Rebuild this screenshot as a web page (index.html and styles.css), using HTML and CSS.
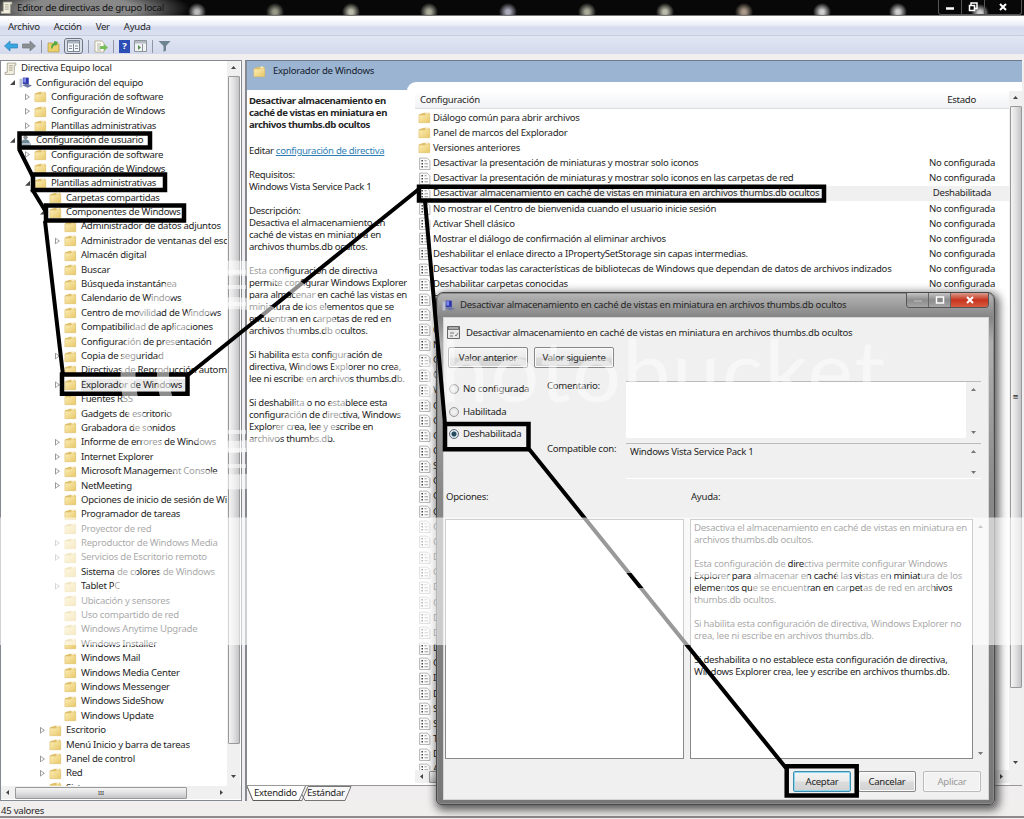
FILE: index.html
```html
<!DOCTYPE html>
<html lang="es">
<head>
    <meta charset="UTF-8">
    <meta name="viewport" content="width=device-width, initial-scale=1.0">
    <title>Editor de directivas de grupo local</title>
    <link rel="stylesheet" href="styles.css">
</head>
<body>
    <!-- Shared icons -->
    <svg class="defs" width="0" height="0">
        <defs>
            <linearGradient id="fold" x1="0" y1="0" x2="1" y2="1">
                <stop offset="0" stop-color="#fdf0bb"/>
                <stop offset="1" stop-color="#e8c766"/>
            </linearGradient>
        </defs>
        <symbol id="folder" viewBox="0 0 12 12">
            <path d="M1 3l4.500-1.500H10.500V10H1z" fill="#e0c06a"/>
            <path d="M7 1.500h2.500v3H7z" fill="#fffbe6"/>
            <path d="M.8 3.800h5.500l1-1h3.500v8H.8z" fill="url(#fold)" stroke="#dcbc68" stroke-width=".5"/>
        </symbol>
        <symbol id="scroll" viewBox="0 0 12 12">
            <path d="M3 1h8v2H9.500v8.500H1V9.500h2z" fill="#f3f0e2" stroke="#a5a192" stroke-width=".8"/>
            <path d="M4.500 3.500h3.500M4.500 5.500h3.500M4.500 7.500h3.500" stroke="#9a9684" stroke-width=".8"/>
        </symbol>
        <symbol id="computer" viewBox="0 0 12 12">
            <path d="M.5 2.500h2.500v8H.5z" fill="#b9c0d4"/>
            <path d="M3.500 1.500h5.500v6H3.500z" fill="#2b35b0"/>
            <path d="M4 2h2.500v4H4z" fill="#7f8ae6"/>
            <path d="M3 8.500l4-1.500 5 1.800-4 2z" fill="#6f79a5"/>
        </symbol>
        <symbol id="user" viewBox="0 0 12 12">
            <circle cx="6" cy="3" r="2" fill="#8a8f96"/>
            <path d="M2 8.500c0-5 8-5 8 0z" fill="#6d8795"/>
            <path d="M1 8.500h10v2.500H1z" fill="#a8b9c4"/>
        </symbol>
        <symbol id="policy" viewBox="0 0 12 12">
            <path d="M1.500 1h7l2.500 2.500V11.500H1.500z" fill="#fdfdfd" stroke="#a9a9a9" stroke-width=".8"/>
            <path d="M3.200 3.500h1.400M3.200 6.200h1.400M3.200 9h1.400" stroke="#444" stroke-width="1.300"/>
            <path d="M6 3.500h2M6 6.200h3.200M6 9h3.200" stroke="#999" stroke-width="1"/>
        </symbol>
    </svg>

    <div class="titlebar">
        <svg class="ic"><use href="#scroll"/></svg>
        <span class="caption">Editor de directivas de grupo local</span>
        <div class="wincontrols">
            <span><svg width="10" height="10"><path d="M1 6.500h8" stroke="#fff" stroke-width="2.500"/></svg></span>
            <span><svg width="10" height="10"><path d="M3 3V1h6v5.500H7M1.500 3.500h5v5h-5z" fill="none" stroke="#fff" stroke-width="1.500"/></svg></span>
            <span class="wide"><svg width="10" height="10"><path d="M2 2l6 6M8 2L2 8" stroke="#fff" stroke-width="2"/></svg></span>
        </div>
    </div>

    <div class="menubar">
        <span>Archivo</span><span>Acción</span><span>Ver</span><span>Ayuda</span>
    </div>

    <div class="toolbar">
        <svg width="14" height="12"><path d="M0.500 6L6 1v3h7.500v4H6v3z" fill="#3aa6e0" stroke="#2b7fb8" stroke-width=".7"/></svg>
        <svg width="14" height="12"><path d="M13.500 6L8 1v3H.5v4H8v3z" fill="#8b8f94" stroke="#74787d" stroke-width=".7"/></svg>
        <b></b>
        <svg width="13" height="13"><path d="M1 3h5l1 1h5v8H1z" fill="#ecd06b" stroke="#b39a45" stroke-width=".7"/><path d="M4 8c0-3 1-4 3-5V1l4 1-2 4-1-1C6 6 6 7 5 9z" fill="#57a843"/></svg>
        <span class="pressed"><svg width="13" height="12"><path d="M.5.500h12v11H.5z" fill="#f5f7fa" stroke="#7d8794"/><path d="M1 1h11v2.500H1z" fill="#aab3bf"/><path d="M6.500 4v7M2 6h3M2 8.500h3M8 6h3M8 8.500h3" stroke="#7d8794"/></svg></span>
        <b></b>
        <svg width="14" height="13"><path d="M1 1h7l2 2v9H1z" fill="#fffef0" stroke="#a9a58a" stroke-width=".8"/><path d="M3 4h4M3 6h3M3 8h3M3 10h4" stroke="#999" stroke-width=".8"/><path d="M6 6h4V4l4 3.500L10 11V9H6z" fill="#79bd5c"/></svg>
        <b></b>
        <span class="help">?</span>
        <svg width="13" height="12"><path d="M.5.500h12v11H.5z" fill="#f0f2f4" stroke="#8d949c"/><path d="M1 1h11v2.500H1z" fill="#b5bbc3"/><path d="M8.500 4v7" stroke="#8d949c"/><path d="M4 5l3 2.500L4 10z" fill="#5a8f54"/></svg>
        <b></b>
        <svg width="13" height="12"><path d="M.5 1h12L8 6v4.500L5.500 12V6z" fill="#6d8490"/></svg>
    </div>

    <div class="workspace">
        <div class="treepane">
            <div class="treebody">
                <ul class="tree" id="tree"></ul>
                <div class="vscroll"><i class="up"></i><div class="thumb treethumb"></div><i class="down"></i></div>
            </div>
            <div class="hscroll"><i class="left"></i><div class="thumb">III</div><i class="right"></i></div>
        </div>

        <div class="rightpane">
            <div class="bluehead">
                <svg class="ic"><use href="#folder"/></svg>Explorador de Windows
            </div>
            <div class="detail">
                <div class="description">
                    <strong>Desactivar almacenamiento en<br>caché de vistas en miniatura en<br>archivos thumbs.db ocultos</strong>
                    <p class="edit">Editar <a>configuración de directiva</a></p>
                    <p>Requisitos:<br>Windows Vista Service Pack 1</p>
                    <p>Descripción:<br>Desactiva el almacenamiento en<br>caché de vistas en miniatura en<br>archivos thumbs.db ocultos.</p>
                    <p>Esta configuración de directiva<br>permite configurar Windows Explorer<br>para almacenar en caché las vistas en<br>miniatura de los elementos que se<br>encuentran en carpetas de red en<br>archivos thumbs.db ocultos.</p>
                    <p>Si habilita esta configuración de<br>directiva, Windows Explorer no crea,<br>lee ni escribe en archivos thumbs.db.</p>
                    <p>Si deshabilita o no establece esta<br>configuración de directiva, Windows<br>Explorer crea, lee y escribe en<br>archivos thumbs.db.</p>
                </div>
                <div class="listing">
                    <div class="listmain">
                        <div class="listhead"><span>Configuración</span><span class="state">Estado</span></div>
                        <ul class="list" id="list"></ul>
                        <div class="hscroll"><i class="left"></i><div class="thumb listthumb"></div><i class="right"></i></div>
                    </div>
                    <div class="vscroll wide"><i class="up"></i><div class="thumb listvthumb">≡</div><i class="down"></i></div>
                </div>
            </div>
            <div class="tabs">
                <svg width="110" height="15"><path d="M0 0l6 14.500h49L61 .5h43L98 14.500H58l-3-6" fill="#f7f7f7" stroke="#555" stroke-width=".8"/><path d="M0 0l6 14h46L58 0z" fill="#fff"/><path d="M0 0l6 14.500h46L58.500 0" fill="none" stroke="#555" stroke-width=".8"/></svg>
                <span class="t1">Extendido</span><span class="t2">Estándar</span>
            </div>
        </div>
    </div>

    <div class="statusbar">45 valores</div>

    <div class="dialog">
        <div class="dlgtitle">
            <svg class="ic"><use href="#computer"/></svg>
            <span>Desactivar almacenamiento en caché de vistas en miniatura en archivos thumbs.db ocultos</span>
            <div class="dlgcontrols">
                <i><svg width="10" height="8"><path d="M1 5h8" stroke="#aaa" stroke-width="2"/></svg></i>
                <i><svg width="10" height="8"><path d="M1.500 1h7v6h-7z" fill="#888" stroke="#fff" stroke-width="1.500"/></svg></i>
                <i class="close"><svg width="10" height="8"><path d="M2 1l6 6M8 1L2 7" stroke="#fff" stroke-width="2"/></svg></i>
            </div>
        </div>
        <div class="client">
            <div class="setting">
                <svg width="13" height="13"><path d="M.5.500h12v12H.5z" fill="#e8e8e8" stroke="#666"/><path d="M1 1h11v3H1z" fill="#777"/><path d="M2 2h9" stroke="#ddd"/><path d="M3 7h4M3 10h3M8 9l1 1 2-3" fill="none" stroke="#777"/></svg>
                <span>Desactivar almacenamiento en caché de vistas en miniatura en archivos thumbs.db ocultos</span>
            </div>
            <div class="nav"><button>Valor anterior</button><button>Valor siguiente</button></div>
            <div class="form">
                <div class="radios">
                    <label><i></i>No configurada</label>
                    <label><i></i>Habilitada</label>
                    <label><i class="on"></i>Deshabilitada</label>
                </div>
                <div class="labels"><span>Comentario:</span><span>Compatible con:</span></div>
                <div class="fields">
                    <div class="field comment"><div></div><div class="mini"><i class="up"></i><i class="down"></i></div></div>
                    <div class="field support"><div>Windows Vista Service Pack 1</div><div class="mini"><i class="up"></i><i class="down"></i></div></div>
                </div>
            </div>
            <div class="headings"><span>Opciones:</span><span>Ayuda:</span></div>
            <div class="boxes">
                <div class="options"></div>
                <div class="helptext">
                    <p>Desactiva el almacenamiento en caché de vistas en miniatura en<br>archivos thumbs.db ocultos.</p>
                    <p>Esta configuración de directiva permite configurar Windows<br>Explorer para almacenar en caché las vistas en miniatura de los<br>elementos que se encuentran en carpetas de red en archivos<br>thumbs.db ocultos.</p>
                    <p>Si habilita esta configuración de directiva, Windows Explorer no<br>crea, lee ni escribe en archivos thumbs.db.</p>
                    <p>Si deshabilita o no establece esta configuración de directiva,<br>Windows Explorer crea, lee y escribe en archivos thumbs.db.</p>
                </div>
                <div class="mini"><i class="up"></i><i class="down"></i></div>
            </div>
            <div class="actions">
                <button class="primary">Aceptar</button><button>Cancelar</button><button disabled>Aplicar</button>
            </div>
        </div>
    </div>

    <!-- Guide boxes and connectors -->
    <svg class="overlay" viewBox="0 0 1024 819">
        <g fill="none" stroke="#000" stroke-width="4.500">
            <path d="M19.500 133.500h130.500v14H19.500zM33 174.500h132v15.500H33zM46 205.500h138v15H46zM62 374.500h125.500v19.200H62z"/>
            <path d="M419 186.800h405v13.700H419zM445 424h83.500v25.300H445zM786.700 766.200h70v29.300h-70z"/>
            <path d="M19 149l14 28M32 189l14 23M45 221l18 154M188 375L419 189M425 201l20 223M529 449L786 768" stroke-width="4"/>
        </g>
    </svg>

    <!-- Watermark -->
    <svg class="overlay" viewBox="0 0 1024 819">
        <path fill="#fff" fill-opacity=".6" fill-rule="evenodd" d="M0 517.500h1024v127.500H0zM622 573h16l9 15h-16zM80 568h34v22H80zM137 568h22v10h-22zM690 577h30v16h-30zM728 572h24v20h-24zM788 556h16v14h-16zM808 572h28v20h-28zM850 572h12v20h-12zM890 572h30v10h-30zM934 582h18v10h-18z"/>
        <g fill="none" stroke="#fff" stroke-opacity=".55">
            <circle cx="235" cy="375" r="107" stroke-width="15"/>
            <circle cx="235" cy="375" r="72" stroke-width="12"/>
            <path d="M228 272h18M228 287h18M228 304h18M228 432h18M228 450h18M228 466h18" stroke-width="4"/>
        </g>
        <text x="391" y="402" class="mark" textLength="494">photobucket</text>
    </svg>

    <script>
        // level, icon, expander (o = open, c = closed, - = none), label
        const nodes = `0 scroll - Directiva Equipo local
1 computer o Configuración del equipo
2 folder c Configuración de software
2 folder c Configuración de Windows
2 folder c Plantillas administrativas
1 user o Configuración de usuario
2 folder c Configuración de software
2 folder - Configuración de Windows
2 folder o Plantillas administrativas
3 folder - Carpetas compartidas
3 folder o Componentes de Windows
4 folder - Administrador de datos adjuntos
4 folder c Administrador de ventanas del escritorio
4 folder - Almacén digital
4 folder - Buscar
4 folder - Búsqueda instantánea
4 folder - Calendario de Windows
4 folder - Centro de movilidad de Windows
4 folder - Compatibilidad de aplicaciones
4 folder - Configuración de presentación
4 folder c Copia de seguridad
4 folder - Directivas de Reproducción automática
4 folder c Explorador de Windows
4 folder - Fuentes RSS
4 folder - Gadgets de escritorio
4 folder - Grabadora de sonidos
4 folder c Informe de errores de Windows
4 folder c Internet Explorer
4 folder c Microsoft Management Console
4 folder c NetMeeting
4 folder - Opciones de inicio de sesión de Windows
4 folder - Programador de tareas
4 folder - Proyector de red
4 folder c Reproductor de Windows Media
4 folder c Servicios de Escritorio remoto
4 folder - Sistema de colores de Windows
4 folder c Tablet PC
4 folder - Ubicación y sensores
4 folder - Uso compartido de red
4 folder - Windows Anytime Upgrade
4 folder - Windows Installer
4 folder - Windows Mail
4 folder - Windows Media Center
4 folder - Windows Messenger
4 folder - Windows SideShow
4 folder - Windows Update
3 folder c Escritorio
3 folder - Menú Inicio y barra de tareas
3 folder c Panel de control
3 folder c Red
3 folder - Sistema`.split('\n');

        document.getElementById('tree').innerHTML = nodes.map(line => {
            const [, level, icon, state, label] = line.match(/^(\d) (\w+) (.) (.+)$/);
            const arrow = { o: 'open', c: 'closed', '-': '' }[state];
            const sel = label === 'Explorador de Windows' ? ' selected' : '';
            return `<li class="level${level}"><i class="arrow ${arrow}"></i><svg class="ic"><use href="#${icon}"/></svg><span class="label${sel}">${label}</span></li>`;
        }).join('');

        const folders = ['Diálogo común para abrir archivos', 'Panel de marcos del Explorador', 'Versiones anteriores'];
        const policies = [
            'Desactivar la presentación de miniaturas y mostrar solo iconos',
            'Desactivar la presentación de miniaturas y mostrar solo iconos en las carpetas de red',
            'Desactivar almacenamiento en caché de vistas en miniatura en archivos thumbs.db ocultos',
            'No mostrar el Centro de bienvenida cuando el usuario inicie sesión',
            'Activar Shell clásico',
            'Mostrar el diálogo de confirmación al eliminar archivos',
            'Deshabilitar el enlace directo a IPropertySetStorage sin capas intermedias.',
            'Desactivar todas las características de bibliotecas de Windows que dependan de datos de archivos indizados',
            'Deshabilitar carpetas conocidas'
        ].concat('D N Q N C C V C C C C S C C Q C C D O D C D D D C I D S S T D A'.split(' '));

        document.getElementById('list').innerHTML =
            folders.map(t => `<li><svg class="ic"><use href="#folder"/></svg><span>${t}</span></li>`).join('') +
            policies.map((t, i) => `<li class="${i === 2 ? 'current' : ''}"><svg class="ic"><use href="#policy"/></svg><span>${t}</span><em>${i === 2 ? 'Deshabilitada' : i < 9 ? 'No configurada' : ''}</em></li>`).join('');
    </script>
</body>
</html>
```
FILE: styles.css
```css
* {
    box-sizing: border-box;
}

body {
    margin: 0;
    width: 1024px;
    height: 819px;
    overflow: hidden;
    position: relative;
    display: flex;
    flex-direction: column;
    background: #f0eeee;
    color: #262626;
    font-family: "Noto Sans", "Open Sans", sans-serif;
    font-size: 9.6px;
    letter-spacing: -0.27px;
    line-height: 12px;
    white-space: nowrap;
}

ul {
    margin: 0;
    padding: 0;
    list-style: none;
}

p {
    margin: 12px 0 0;
}

.defs {
    position: absolute;
}

.ic {
    width: 13px;
    height: 13px;
    flex: none;
}

/* Main window chrome */
.titlebar {
    height: 16px;
    flex: none;
    display: flex;
    align-items: center;
    background:
        radial-gradient(ellipse 110px 24px at 80px 9px, #888 50%, transparent 100%),
        radial-gradient(circle at 197px 12px, #bbb 2px, transparent 9px),
        radial-gradient(circle at 275px 12px, #998 2px, transparent 9px),
        radial-gradient(circle at 351px 12px, #bba 2px, transparent 9px),
        radial-gradient(circle at 429px 12px, #aa9 2px, transparent 9px),
        radial-gradient(circle at 508px 12px, #aab 2px, transparent 9px),
        radial-gradient(circle at 587px 12px, #aa9 2px, transparent 9px),
        radial-gradient(circle at 665px 12px, #bba 2px, transparent 9px),
        radial-gradient(circle at 744px 12px, #a98 2px, transparent 9px),
        radial-gradient(circle at 822px 12px, #ccc 2px, transparent 9px),
        radial-gradient(circle at 898px 12px, #ccc 2px, transparent 9px),
        radial-gradient(circle at 980px 13px, #ccc 2px, transparent 9px),
        #080808;
    border-bottom: 1px solid #777;
}

.caption {
    margin-left: 4px;
    padding-top: 1px;
    font-size: 9.8px;
    color: #111;
}

.wincontrols {
    margin-left: auto;
    margin-right: 2px;
    height: 15px;
    display: flex;
    border: 1px solid #555;
    border-top: 0;
    border-radius: 0 0 3px 3px;
}

.wincontrols span {
    width: 23px;
    display: flex;
    justify-content: center;
    align-items: center;
    border-right: 1px solid #555;
}

.wincontrols .wide {
    width: 36px;
    border-right: 0;
}

.menubar {
    height: 20px;
    flex: none;
    display: flex;
    align-items: center;
    gap: 14px;
    padding: 2px 0 0 8px;
    background: linear-gradient(#fff 10%, #eceff8 45%, #d6dcee 60%, #dbe0f1);
    border-bottom: 1px solid #c9cedd;
}

.toolbar {
    height: 18px;
    flex: none;
    display: flex;
    align-items: center;
    gap: 4px;
    padding: 2px 4px 0;
    background: linear-gradient(#e2e6f5, #d3d9ec);
}

.toolbar b {
    width: 1px;
    height: 13px;
    margin: 0 1px;
    background: #8f96a6;
}

.pressed {
    width: 19px;
    height: 16px;
    display: flex;
    align-items: center;
    justify-content: center;
    background: #d9dee8;
    border: 1px solid #6d7583;
    border-radius: 3px;
}

.help {
    width: 11px;
    height: 13px;
    background: #2d4fb5;
    color: #fff;
    font-weight: bold;
    text-align: center;
}

/* Panels */
.workspace {
    height: 747px;
    flex: none;
    display: flex;
    gap: 3px;
    padding: 6px 2px 0 0;
}

.treepane {
    width: 242px;
    flex: none;
    display: flex;
    flex-direction: column;
    background: #fff;
    border: 1px solid #858a92;
}

.treebody {
    height: 725px;
    display: flex;
    overflow: hidden;
}

.tree {
    width: 226px;
    overflow: hidden;
}

.tree li {
    height: 14.4px;
    display: flex;
    align-items: center;
}

.tree .label {
    margin-left: 4px;
}

.tree .selected {
    padding-right: 3px;
    background: #e9e9e9;
}

.arrow {
    width: 13px;
    height: 9px;
    flex: none;
    display: flex;
    align-items: center;
    justify-content: center;
}

.arrow.closed::before {
    content: "";
    width: 5px;
    height: 7px;
    background: #999;
    clip-path: polygon(0 0, 100% 50%, 0 100%, 0 0, 1px 1.500px, 1px 5.500px, 3.500px 50%, 1px 1.500px);
}

.arrow.open::before {
    content: "";
    width: 5px;
    height: 5px;
    background: #444;
    clip-path: polygon(100% 0, 100% 100%, 0 100%);
}

.level0 .arrow {
    width: 3px;
}

.level1 {
    padding-left: 5px;
}

.level2 {
    padding-left: 20px;
}

.level3 {
    padding-left: 35px;
}

.level4 {
    padding-left: 50px;
}

/* Scrollbars */
.vscroll {
    width: 13px;
    flex: none;
    display: flex;
    flex-direction: column;
    align-items: center;
    background: #f0f0f0;
}

.vscroll .thumb {
    width: 12px;
    border: 1px solid #999;
    border-radius: 1px;
    background: linear-gradient(90deg, #f4f4f4, #e2e2e2 45%, #c4c4c8);
    display: flex;
    align-items: center;
    justify-content: center;
}

.treethumb {
    height: 668px;
    margin: 7px 0 31px;
}

.listvthumb {
    height: 582px;
    margin: 7px 0 73px;
}

.hscroll {
    height: 13px;
    display: flex;
    align-items: center;
    background: #f0f0f0;
    padding: 0 5px;
    gap: 6px;
}

.hscroll .thumb {
    width: 172px;
    height: 12px;
    border: 1px solid #999;
    border-radius: 1px;
    background: linear-gradient(#f4f4f4, #e2e2e2 45%, #c4c4c8);
    font-size: 6px;
    letter-spacing: 0;
    line-height: 10px;
    text-align: center;
}

.hscroll .listthumb {
    width: 500px;
}

.hscroll .right {
    margin-left: auto;
    margin-right: 13px;
}

.listing .hscroll .right {
    margin-right: 1px;
}

.up,
.down,
.left,
.right {
    width: 5px;
    height: 3px;
    flex: none;
    background: #444;
    clip-path: polygon(50% 0, 100% 100%, 0 100%);
}

.down {
    clip-path: polygon(0 0, 100% 0, 50% 100%);
}

.left,
.right {
    width: 3px;
    height: 5px;
    clip-path: polygon(100% 0, 100% 100%, 0 50%);
}

.right {
    clip-path: polygon(0 0, 100% 50%, 0 100%);
}

.vscroll .up {
    margin-top: 5px;
}

/* Right pane */
.rightpane {
    flex: 1;
    min-width: 0;
    display: flex;
    flex-direction: column;
    border-left: 2px solid #858a92;
    border-top: 1px solid #6f7b8c;
}

.bluehead {
    height: 29px;
    flex: none;
    display: flex;
    align-items: flex-start;
    gap: 7px;
    padding: 4px 6px;
    background: #9ab4d1;
    color: #16202e;
}

.detail {
    height: 695px;
    flex: none;
    display: flex;
    background: #fff;
}

.description {
    width: 160px;
    flex: none;
    padding: 5px 0 0 2px;
    letter-spacing: -0.31px;
}

.description strong {
    letter-spacing: -0.42px;
}

.description .edit {
    margin-top: 14px;
}

.description a {
    color: #2f7fb5;
    text-decoration: underline;
}

.listing {
    flex: 1;
    min-width: 0;
    display: flex;
    margin-top: -8px;
    padding-top: 9px;
    background: #fff;
    border-radius: 9px 0 0 0;
}

.listmain {
    flex: 1;
    min-width: 0;
    display: flex;
    flex-direction: column;
    padding-left: 8px;
}

.listhead {
    height: 18px;
    flex: none;
    display: flex;
    align-items: center;
    justify-content: space-between;
    padding: 0 33px 0 5px;
    background: linear-gradient(#fff, #f1f2f4);
    border-bottom: 1px solid #dcdcdc;
}

.list {
    height: 661px;
    flex: none;
    padding-top: 1px;
    overflow: hidden;
}

.list li {
    height: 15.170px;
    display: flex;
    align-items: center;
    padding-left: 3px;
}

.list span {
    margin-left: 2px;
}

.list em {
    width: 94px;
    margin-left: auto;
    font-style: normal;
    text-align: center;
}

.list .current {
    background: linear-gradient(90deg, #fff 50px, #f0f0f0 50px);
}

.tabs {
    position: relative;
    height: 15px;
    flex: none;
    border-top: 1px solid #999;
}

.tabs svg {
    display: block;
}

/* Captions printed over the tab outlines */
.tabs span {
    position: absolute;
    top: 1px;
}

.tabs .t1 {
    left: 7px;
}

.tabs .t2 {
    left: 60px;
}

.statusbar {
    height: 17px;
    flex: none;
    padding: 4px 1px 0;
    border-bottom: 2px solid #908a8c;
    background: #f1eeee;
}

/* Policy dialog */
.dialog {
    position: absolute;
    left: 436px;
    top: 292px;
    width: 559px;
    height: 513px;
    padding: 0 5px 5px 6px;
    border: 1px solid #4a4a4a;
    border-radius: 7px 7px 5px 5px;
    background: linear-gradient(#b6b6b6, #858585 24px, #b0b0b0 50px, #888 200px, #777);
    box-shadow: 0 0 0 1px #8a8a8a inset, 2px 3px 10px 2px rgba(0, 0, 0, .65);
}

.dlgtitle {
    height: 24px;
    display: flex;
    align-items: center;
    gap: 5px;
    margin-left: -1px;
}

.dlgcontrols {
    height: 15px;
    display: flex;
    align-self: flex-start;
    margin: 0 0 0 auto;
    border: 1px solid #555;
    border-top: 0;
    border-radius: 0 0 4px 4px;
    overflow: hidden;
}

.dlgcontrols i {
    width: 22px;
    display: flex;
    align-items: center;
    justify-content: center;
    border-right: 1px solid #666;
    background: linear-gradient(#c4c4c4, #8c8c8c 50%, #a5a5a5);
}

.dlgcontrols .close {
    width: 37px;
    border: 0;
    background: linear-gradient(#dc9a8b, #c6341f 50%, #d75b40);
}

.client {
    height: 483px;
    padding: 7px 7px 0 2px;
    background: #f0f0f0;
    border: 1px solid #d5d5d5;
}

.setting {
    height: 15px;
    display: flex;
    align-items: center;
    gap: 6px;
    padding-left: 1px;
}

button {
    height: 21px;
    padding: 0;
    border: 1px solid #888;
    border-radius: 2px;
    background: linear-gradient(#f4f4f4, #ebebeb 48%, #dcdcdc 52%, #d2d2d2);
    box-shadow: 0 0 0 1px #fafafa inset;
    color: inherit;
    font: inherit;
    letter-spacing: inherit;
}

.nav {
    display: flex;
    gap: 6px;
    padding: 7px 0 0 2px;
}

.nav button {
    width: 80px;
}

.form {
    height: 120px;
    display: grid;
    grid-template-columns: 101px 79px 1fr;
    padding-top: 13px;
}

.radios {
    padding: 2px 0 0 3px;
}

.radios label {
    height: 22.500px;
    display: flex;
    align-items: flex-start;
    gap: 4px;
}

.radios i {
    width: 10px;
    height: 10px;
    margin-top: 1px;
    border: 1px solid #999;
    border-radius: 50%;
    background: radial-gradient(circle, #f5f5f5, #ddd);
}

.radios .on {
    border-color: #667;
    background: radial-gradient(circle, #24485c 2px, #dbe8ee 3px);
}

.labels {
    display: flex;
    flex-direction: column;
    gap: 51px;
    margin-top: -1px;
}

.field {
    display: flex;
    width: 355px;
    border-top: 1px solid #bbb;
}

.field > div:first-child {
    flex: 1;
    padding: 2px 4px;
}

.comment {
    height: 57px;
}

.comment > div:first-child {
    background: #fff;
}

.support {
    height: 36px;
    margin-top: 5px;
    border-bottom: 1px solid #fff;
}

.mini {
    width: 15px;
    flex: none;
    display: flex;
    flex-direction: column;
    align-items: center;
    justify-content: space-between;
    padding: 6px 0 4px;
    opacity: .7;
}

.headings {
    height: 31px;
    display: grid;
    grid-template-columns: 245px 1fr;
    padding-top: 3px;
}

.boxes {
    height: 240px;
    display: flex;
    margin: 0 -3px 0 -1px;
}

.options {
    width: 239px;
    flex: none;
    border: 1px solid #888;
    background: #fff;
}

.helptext {
    width: 283px;
    flex: none;
    margin-left: 6px;
    padding: 2px 3px;
    border: 1px solid #888;
    background: #fff;
}

.helptext p:first-child {
    margin-top: 0;
}

.actions {
    display: flex;
    justify-content: flex-end;
    gap: 7px;
    padding: 12px 0 0;
}

.actions button {
    width: 58px;
}

.actions .primary {
    border-color: #3c8fae;
    box-shadow: 0 0 0 1px #8fd6ee inset;
}

.actions button:disabled {
    border-color: #bbb;
    background: #f2f2f2;
    color: #999;
}

.overlay {
    position: absolute;
    left: 0;
    top: 0;
    width: 1024px;
    height: 819px;
    pointer-events: none;
}

.mark {
    font-family: Lato, sans-serif;
    font-size: 86px;
    letter-spacing: 0;
    fill: #fff;
    fill-opacity: .45;
}
```
